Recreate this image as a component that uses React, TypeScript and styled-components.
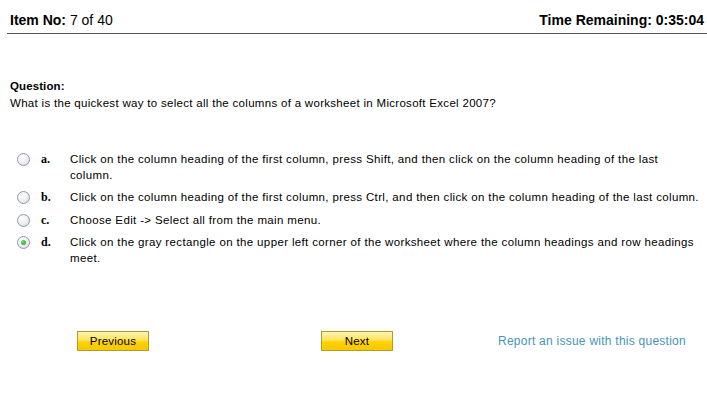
import React from "react";
import styled, { createGlobalStyle } from "styled-components";

const Global = createGlobalStyle`
  html, body { margin: 0; padding: 0; background: #fff; }
  body { font-family: "Liberation Sans", Arial, sans-serif; color: #000; }
`;

const Page = styled.div`
  width: 700px;
  padding-left: 7px;
`;

const Header = styled.div`
  display: flex;
  justify-content: space-between;
  align-items: flex-end;
  padding: 12px 3px 5px 3px;
  border-bottom: 1px solid #555;
  font-size: 14px;
  line-height: 16px;
`;

const HeadText = styled.div<{ $bold?: boolean }>`
  font-weight: ${(p) => (p.$bold ? "bold" : "normal")};
`;

const Strong = styled.span`
  font-weight: bold;
`;

const QuestionBlock = styled.div`
  margin-top: 44px;
  padding-left: 3px;
  font-size: 11.5px;
  letter-spacing: 0.3px;
  line-height: 16px;
`;

const QLabel = styled.div`
  font-weight: bold;
  letter-spacing: 0.1px;
`;

const QText = styled.div`
  margin-top: 1px;
`;

const Options = styled.div`
  margin-top: 41px;
  display: flex;
  flex-direction: column;
  gap: 7px;
`;

const OptionRow = styled.div`
  display: flex;
  align-items: flex-start;
  padding-left: 10px;
  font-size: 11.5px;
  letter-spacing: 0.36px;
  line-height: 15.5px;
`;

const Radio = styled.span<{ $checked?: boolean }>`
  flex: none;
  width: 13px;
  height: 13px;
  margin-top: 1px;
  border-radius: 50%;
  box-sizing: border-box;
  border: 1px solid #8a9bad;
  background: radial-gradient(circle at 35% 30%, #ffffff 0%, #f0f0f0 50%, #d6d6d6 100%);
  display: flex;
  align-items: center;
  justify-content: center;
  &::after {
    content: "";
    display: ${(p) => (p.$checked ? "block" : "none")};
    width: 5px;
    height: 5px;
    border-radius: 50%;
    background: radial-gradient(circle at 40% 35%, #6fe06f, #1f9a1f);
  }
`;

const Letter = styled.span`
  flex: none;
  width: 29px;
  margin-left: 11px;
  font-family: "Liberation Serif", "Times New Roman", serif;
  font-weight: bold;
  font-size: 12px;
  letter-spacing: 0;
`;

const OptText = styled.span`
  flex: 1;
  padding-right: 6px;
`;

const Footer = styled.div`
  margin-top: 65px;
  display: flex;
  align-items: center;
  padding-left: 70px;
`;

const Button = styled.button<{ $gapAfter: number }>`
  width: 72px;
  height: 20px;
  padding: 0;
  margin-right: ${(p) => p.$gapAfter}px;
  box-sizing: border-box;
  border: 1px solid #b69a2a;
  background: linear-gradient(to bottom, #fff5b5 0%, #ffe25a 45%, #ffd200 55%, #f7c800 100%);
  font-family: "Liberation Sans", Arial, sans-serif;
  font-size: 11.5px;
  letter-spacing: 0.2px;
  color: #000;
  cursor: pointer;
`;

const ReportLink = styled.a`
  color: #4596b8;
  font-size: 12px;
  letter-spacing: 0.25px;
  text-decoration: none;
  cursor: pointer;
`;

const options = [
  {
    letter: "a.",
    text: "Click on the column heading of the first column, press Shift, and then click on the column heading of the last column.",
  },
  {
    letter: "b.",
    text: "Click on the column heading of the first column, press Ctrl, and then click on the column heading of the last column.",
  },
  { letter: "c.", text: "Choose Edit -> Select all from the main menu." },
  {
    letter: "d.",
    text: "Click on the gray rectangle on the upper left corner of the worksheet where the column headings and row headings meet.",
    checked: true,
  },
];

export default function App() {
  return (
    <>
      <Global />
      <Page>
        <Header>
          <HeadText>
            <Strong>Item No:</Strong> 7 of 40
          </HeadText>
          <HeadText $bold>Time Remaining: 0:35:04</HeadText>
        </Header>
        <QuestionBlock>
          <QLabel>Question:</QLabel>
          <QText>
            What is the quickest way to select all the columns of a worksheet in Microsoft Excel 2007?
          </QText>
        </QuestionBlock>
        <Options>
          {options.map((o) => (
            <OptionRow key={o.letter}>
              <Radio $checked={o.checked} />
              <Letter>{o.letter}</Letter>
              <OptText>{o.text}</OptText>
            </OptionRow>
          ))}
        </Options>
        <Footer>
          <Button $gapAfter={172}>Previous</Button>
          <Button $gapAfter={105}>Next</Button>
          <ReportLink>Report an issue with this question</ReportLink>
        </Footer>
      </Page>
    </>
  );
}
